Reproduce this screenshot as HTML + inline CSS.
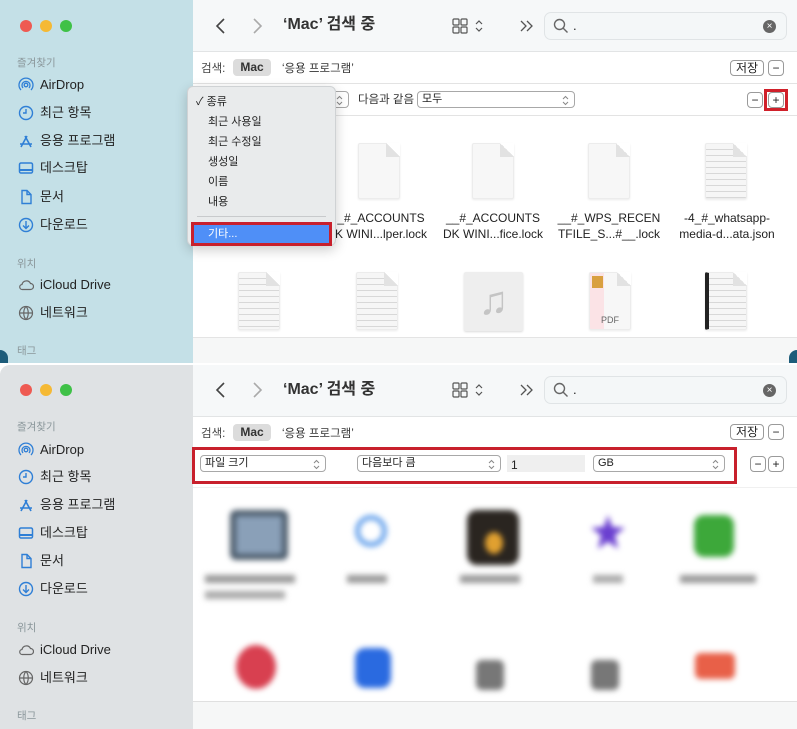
<!DOCTYPE html>
<html><head><meta charset="utf-8">
<style>
*{margin:0;padding:0;box-sizing:border-box}
body{width:797px;height:729px;position:relative;overflow:hidden;background:#fff;font-family:"Liberation Sans","Noto Sans CJK KR",sans-serif;color:#222}
.win{position:absolute;left:0;width:797px;overflow:hidden}
.a{position:absolute}
.sb{position:absolute;left:0;top:0;width:193px;height:100%}
.dot{position:absolute;width:12px;height:12px;border-radius:50%}
.hd{position:absolute;left:17px;font-size:10.5px;color:#8a969a}
.it{position:absolute;left:40px;font-size:13px;color:#222;line-height:16px}
.ic{position:absolute;left:18px;width:16px;height:16px}
.main{position:absolute;left:193px;top:0;right:0;bottom:0;background:#fff}
.tb{position:absolute;left:0;right:0;top:0;height:52px;background:#f6f8f9;border-bottom:1px solid #e2e4e5}
.t{position:absolute;font-size:13px;line-height:16px;white-space:nowrap}
.btn{position:absolute;border:1px solid #9a9a9a;border-radius:4px;background:#fff;font-size:12px;line-height:14px;text-align:center;color:#222}
.pop{position:absolute;border:1px solid #a8a8a8;border-radius:4px;background:#fff;font-size:11px;line-height:15px;padding-left:4px;height:17px}
.pop svg{position:absolute;right:5px;top:3px}
.sep{position:absolute;left:0;right:0;height:1px;background:#e3e3e3}
.doc{position:absolute;width:42px;height:56px;background:#f7f7f7;border:1px solid #ececec;border-radius:2px;box-shadow:0 1px 2px rgba(0,0,0,.08)}
.doc:before{content:"";position:absolute;right:-1px;top:-1px;width:14px;height:14px;background:linear-gradient(225deg,#fff 50%,#e2e2e2 50%)}
.lines{background:repeating-linear-gradient(#f6f6f6 0 5px,#d8d8d8 5px 6px)}
.lbl{position:absolute;width:110px;text-align:center;font-size:12px;line-height:16px;color:#222}
.blur{filter:blur(3px)}
</style></head><body>
<svg width="0" height="0" style="position:absolute"><defs><g id="ud"><path d="M1 4l2.5-2.5L6 4M1 7l2.5 2.5L6 7" fill="none" stroke="#888" stroke-width="1"/></g></defs></svg>

<!-- TOP WINDOW -->
<div class="win" style="top:0;height:363px;background:#c4e0e7">
 <div class="sb" style="background:#c4e0e7">
  <div class="dot" style="left:20px;top:20px;background:#ee5a52"></div>
  <div class="dot" style="left:40px;top:20px;background:#f5b934"></div>
  <div class="dot" style="left:60px;top:20px;background:#3fc147"></div>
  <div class="hd" style="top:55px">즐겨찾기</div>
  <svg class="ic" style="top:77px" viewBox="0 0 16 16" fill="none" stroke="#2f7fd6" stroke-width="1.3"><circle cx="8" cy="8" r="1.8"/><path d="M5 11a4 4 0 1 1 6 0M3 13a7 7 0 1 1 10 0"/></svg><div class="it" style="top:77px">AirDrop</div>
  <svg class="ic" style="top:105px" viewBox="0 0 16 16" fill="none" stroke="#2f7fd6" stroke-width="1.4"><circle cx="8" cy="8" r="6.5"/><path d="M8 4v4H5"/></svg><div class="it" style="top:105px">최근 항목</div>
  <svg class="ic" style="top:133px" viewBox="0 0 16 16" fill="none" stroke="#2f7fd6" stroke-width="1.6"><path d="M3 14L9 3M13 14L7 3M2 11h12"/></svg><div class="it" style="top:133px">응용 프로그램</div>
  <svg class="ic" style="top:160px" viewBox="0 0 16 16" fill="none" stroke="#2f7fd6" stroke-width="1.5"><rect x="1.5" y="3" width="13" height="10" rx="1.5"/><path d="M2 10h12" stroke-width="2"/></svg><div class="it" style="top:160px">데스크탑</div>
  <svg class="ic" style="top:189px" viewBox="0 0 16 16" fill="none" stroke="#2f7fd6" stroke-width="1.4"><path d="M4 1.5h5l4 4v9H4z M9 1.5v4h4"/></svg><div class="it" style="top:189px">문서</div>
  <svg class="ic" style="top:217px" viewBox="0 0 16 16" fill="none" stroke="#2f7fd6" stroke-width="1.4"><circle cx="8" cy="8" r="6.5"/><path d="M8 4v7M5 8.5l3 3 3-3"/></svg><div class="it" style="top:217px">다운로드</div>
  <div class="hd" style="top:256px">위치</div>
  <svg class="ic" style="top:277px" viewBox="0 0 16 16" fill="none" stroke="#666" stroke-width="1.2"><path d="M4.5 12.5h8a3 3 0 0 0 0-6 4.5 4.5 0 0 0-8.5 1 2.5 2.5 0 0 0 .5 5z"/></svg><div class="it" style="top:277px">iCloud Drive</div>
  <svg class="ic" style="top:305px" viewBox="0 0 16 16" fill="none" stroke="#666" stroke-width="1.2"><circle cx="8" cy="8" r="6.5"/><path d="M1.5 8h13M8 1.5c-3 3-3 10 0 13M8 1.5c3 3 3 10 0 13"/></svg><div class="it" style="top:305px">네트워크</div>
  <div class="hd" style="top:343px">태그</div>
  <div class="a" style="left:0;top:350px;width:8px;height:13px;background:#1d5c7a;border-top-right-radius:8px"></div>
 </div>
 <div class="main" style="border-top-right-radius:10px">
  <div class="tb">
   <svg class="a" style="left:22px;top:17px" width="12" height="18" viewBox="0 0 12 18" fill="none" stroke="#444" stroke-width="1.6"><path d="M9 2L2 9l7 7"/></svg>
   <svg class="a" style="left:58px;top:17px" width="12" height="18" viewBox="0 0 12 18" fill="none" stroke="#aaa" stroke-width="1.6"><path d="M3 2l7 7-7 7"/></svg>
   <div class="t" style="left:90px;top:17px;font-size:16px;font-weight:bold;color:#333">‘Mac’ 검색 중</div>
   <svg class="a" style="left:259px;top:18px" width="32" height="16" viewBox="0 0 32 16" fill="none" stroke="#555" stroke-width="1.2"><rect x="1" y="1" width="6" height="6" rx="1"/><rect x="9" y="1" width="6" height="6" rx="1"/><rect x="1" y="9" width="6" height="6" rx="1"/><rect x="9" y="9" width="6" height="6" rx="1"/><path d="M24 6l3-3 3 3M24 10l3 3 3-3"/></svg>
   <svg class="a" style="left:326px;top:19px" width="16" height="14" viewBox="0 0 16 14" fill="none" stroke="#555" stroke-width="1.3"><path d="M2 2l5 5-5 5M8 2l5 5-5 5"/></svg>
   <div class="a" style="left:351px;top:12px;width:243px;height:28px;border:1px solid #e0e4e6;border-radius:7px;background:#f4f7f8"></div>
   <svg class="a" style="left:360px;top:18px" width="16" height="16" viewBox="0 0 16 16" fill="none" stroke="#666" stroke-width="1.4"><circle cx="6.5" cy="6.5" r="5"/><path d="M10 10l4.5 4.5"/></svg>
   <div class="t" style="left:380px;top:18px">.</div>
   <div class="a" style="left:570px;top:20px;width:13px;height:13px;border-radius:50%;background:#666;color:#fff;font-size:10px;line-height:13px;text-align:center">×</div>
  </div>
  <div class="t" style="left:8px;top:61px;font-size:11.5px;color:#444">검색:</div>
  <div class="a" style="left:40px;top:59px;width:38px;height:17px;background:#dcdcdc;border-radius:4px;font-size:12px;font-weight:bold;text-align:center;line-height:17px;color:#333">Mac</div>
  <div class="t" style="left:89px;top:61px;font-size:11.5px;color:#333">‘응용 프로그램’</div>
  <div class="btn" style="left:537px;top:60px;width:34px;height:16px">저장</div>
  <div class="btn" style="left:575px;top:60px;width:16px;height:16px">−</div>
  <div class="sep" style="top:83px"></div>
  <div class="pop" style="left:120px;top:91px;width:36px"><svg width="7" height="11"><use href="#ud"/></svg></div>
  <div class="t" style="left:165px;top:92px;font-size:11.5px;color:#333">다음과 같음</div>
  <div class="pop" style="left:224px;top:91px;width:158px">모두<svg width="7" height="11"><use href="#ud"/></svg></div>
  <div class="btn" style="left:554px;top:92px;width:16px;height:16px">−</div>
  <div class="a" style="left:571px;top:89px;width:24px;height:22px;border:3px solid #d0202a"></div>
  <div class="btn" style="left:575px;top:92px;width:16px;height:16px">+</div>
  <div class="sep" style="top:115px"></div>

  <div class="doc" style="left:165px;top:143px"></div>
  <div class="doc" style="left:279px;top:143px"></div>
  <div class="doc" style="left:395px;top:143px"></div>
  <div class="doc lines" style="left:512px;top:143px"></div>
  <div class="lbl" style="left:133px;top:210px">_#_ACCOUNTS<br>K WINI...lper.lock</div>
  <div class="lbl" style="left:245px;top:210px">__#_ACCOUNTS<br>DK WINI...fice.lock</div>
  <div class="lbl" style="left:361px;top:210px">__#_WPS_RECEN<br>TFILE_S...#__.lock</div>
  <div class="lbl" style="left:479px;top:210px">-4_#_whatsapp-<br>media-d...ata.json</div>

  <div class="doc lines" style="left:45px;top:272px;height:58px"></div>
  <div class="doc lines" style="left:163px;top:272px;height:58px"></div>
  <div class="a" style="left:271px;top:272px;width:59px;height:59px;background:#eeeeee;border-radius:2px;box-shadow:0 1px 2px rgba(0,0,0,.15);color:#c4c4c4;font-size:40px;text-align:center;line-height:59px">♫</div>
  <div class="doc" style="left:396px;top:272px;height:58px;background:linear-gradient(90deg,#fbe3e6 0 14px,#f7f7f7 14px)"><div class="a" style="left:2px;top:3px;width:11px;height:12px;background:#d9a040"></div><div class="a" style="left:0;right:0;top:42px;font-size:9px;color:#666;text-align:center">PDF</div></div>
  <div class="doc lines" style="left:512px;top:272px;height:58px;border-left:4px solid #222"></div>

  <div class="a" style="left:0;right:0;top:337px;height:26px;background:#f6f7f7;border-top:1px solid #e4e4e4"></div>
  <div class="a" style="right:0;top:350px;width:8px;height:13px;background:#1d5c7a;border-top-left-radius:8px"></div>
 </div>
 <!-- menu -->
 <div class="a" style="left:187px;top:86px;width:149px;height:160px;background:#e9ebec;border:1px solid #cfd2d4;border-radius:6px;box-shadow:0 4px 12px rgba(0,0,0,.2)">
  <div class="t" style="left:8px;top:7px;font-size:11px">✓ 종류</div>
  <div class="t" style="left:20px;top:27px;font-size:11px">최근 사용일</div>
  <div class="t" style="left:20px;top:47px;font-size:11px">최근 수정일</div>
  <div class="t" style="left:20px;top:67px;font-size:11px">생성일</div>
  <div class="t" style="left:20px;top:87px;font-size:11px">이름</div>
  <div class="t" style="left:20px;top:107px;font-size:11px">내용</div>
  <div class="a" style="left:9px;right:9px;top:129px;height:1px;background:#c8cacc"></div>
  <div class="a" style="left:3px;top:135px;width:141px;height:24px;border:3px solid #c8202c;background:#4f8ff7;color:#fff;font-size:11px;line-height:18px;padding-left:14px">기타...</div>
 </div>
</div>

<!-- BOTTOM WINDOW -->
<div class="win" style="top:365px;height:364px;background:#dfe2e4;border-top-left-radius:10px">
 <div class="sb" style="background:#dfe2e4;border-top-left-radius:10px">
  <div class="dot" style="left:20px;top:19px;background:#ee5a52"></div>
  <div class="dot" style="left:40px;top:19px;background:#f5b934"></div>
  <div class="dot" style="left:60px;top:19px;background:#3fc147"></div>
  <div class="hd" style="top:54px">즐겨찾기</div>
  <svg class="ic" style="top:77px" viewBox="0 0 16 16" fill="none" stroke="#2f7fd6" stroke-width="1.3"><circle cx="8" cy="8" r="1.8"/><path d="M5 11a4 4 0 1 1 6 0M3 13a7 7 0 1 1 10 0"/></svg><div class="it" style="top:77px">AirDrop</div>
  <svg class="ic" style="top:104px" viewBox="0 0 16 16" fill="none" stroke="#2f7fd6" stroke-width="1.4"><circle cx="8" cy="8" r="6.5"/><path d="M8 4v4H5"/></svg><div class="it" style="top:104px">최근 항목</div>
  <svg class="ic" style="top:132px" viewBox="0 0 16 16" fill="none" stroke="#2f7fd6" stroke-width="1.6"><path d="M3 14L9 3M13 14L7 3M2 11h12"/></svg><div class="it" style="top:132px">응용 프로그램</div>
  <svg class="ic" style="top:160px" viewBox="0 0 16 16" fill="none" stroke="#2f7fd6" stroke-width="1.5"><rect x="1.5" y="3" width="13" height="10" rx="1.5"/><path d="M2 10h12" stroke-width="2"/></svg><div class="it" style="top:160px">데스크탑</div>
  <svg class="ic" style="top:188px" viewBox="0 0 16 16" fill="none" stroke="#2f7fd6" stroke-width="1.4"><path d="M4 1.5h5l4 4v9H4z M9 1.5v4h4"/></svg><div class="it" style="top:188px">문서</div>
  <svg class="ic" style="top:216px" viewBox="0 0 16 16" fill="none" stroke="#2f7fd6" stroke-width="1.4"><circle cx="8" cy="8" r="6.5"/><path d="M8 4v7M5 8.5l3 3 3-3"/></svg><div class="it" style="top:216px">다운로드</div>
  <div class="hd" style="top:255px">위치</div>
  <svg class="ic" style="top:277px" viewBox="0 0 16 16" fill="none" stroke="#666" stroke-width="1.2"><path d="M4.5 12.5h8a3 3 0 0 0 0-6 4.5 4.5 0 0 0-8.5 1 2.5 2.5 0 0 0 .5 5z"/></svg><div class="it" style="top:277px">iCloud Drive</div>
  <svg class="ic" style="top:305px" viewBox="0 0 16 16" fill="none" stroke="#666" stroke-width="1.2"><circle cx="8" cy="8" r="6.5"/><path d="M1.5 8h13M8 1.5c-3 3-3 10 0 13M8 1.5c3 3 3 10 0 13"/></svg><div class="it" style="top:305px">네트워크</div>
  <div class="hd" style="top:343px">태그</div>
 </div>
 <div class="main">
  <div class="tb">
   <svg class="a" style="left:22px;top:16px" width="12" height="18" viewBox="0 0 12 18" fill="none" stroke="#444" stroke-width="1.6"><path d="M9 2L2 9l7 7"/></svg>
   <svg class="a" style="left:58px;top:16px" width="12" height="18" viewBox="0 0 12 18" fill="none" stroke="#aaa" stroke-width="1.6"><path d="M3 2l7 7-7 7"/></svg>
   <div class="t" style="left:90px;top:17px;font-size:16px;font-weight:bold;color:#333">‘Mac’ 검색 중</div>
   <svg class="a" style="left:259px;top:17px" width="32" height="16" viewBox="0 0 32 16" fill="none" stroke="#555" stroke-width="1.2"><rect x="1" y="1" width="6" height="6" rx="1"/><rect x="9" y="1" width="6" height="6" rx="1"/><rect x="1" y="9" width="6" height="6" rx="1"/><rect x="9" y="9" width="6" height="6" rx="1"/><path d="M24 6l3-3 3 3M24 10l3 3 3-3"/></svg>
   <svg class="a" style="left:326px;top:18px" width="16" height="14" viewBox="0 0 16 14" fill="none" stroke="#555" stroke-width="1.3"><path d="M2 2l5 5-5 5M8 2l5 5-5 5"/></svg>
   <div class="a" style="left:351px;top:11px;width:243px;height:28px;border:1px solid #e0e4e6;border-radius:7px;background:#f4f7f8"></div>
   <svg class="a" style="left:360px;top:17px" width="16" height="16" viewBox="0 0 16 16" fill="none" stroke="#666" stroke-width="1.4"><circle cx="6.5" cy="6.5" r="5"/><path d="M10 10l4.5 4.5"/></svg>
   <div class="t" style="left:380px;top:17px">.</div>
   <div class="a" style="left:570px;top:19px;width:13px;height:13px;border-radius:50%;background:#666;color:#fff;font-size:10px;line-height:13px;text-align:center">×</div>
  </div>
  <div class="t" style="left:8px;top:61px;font-size:11.5px;color:#444">검색:</div>
  <div class="a" style="left:40px;top:59px;width:38px;height:17px;background:#dcdcdc;border-radius:4px;font-size:12px;font-weight:bold;text-align:center;line-height:17px;color:#333">Mac</div>
  <div class="t" style="left:89px;top:61px;font-size:11.5px;color:#333">‘응용 프로그램’</div>
  <div class="btn" style="left:537px;top:59px;width:34px;height:16px">저장</div>
  <div class="btn" style="left:575px;top:59px;width:16px;height:16px">−</div>
  <div class="a" style="left:-1px;top:82px;width:545px;height:37px;border:3px solid #c8202c"></div>
  <div class="pop" style="left:7px;top:90px;width:126px">파일 크기<svg width="7" height="11"><use href="#ud"/></svg></div>
  <div class="pop" style="left:164px;top:90px;width:144px">다음보다 큼<svg width="7" height="11"><use href="#ud"/></svg></div>
  <div class="a" style="left:314px;top:90px;width:78px;height:17px;background:#efefef;font-size:12px;line-height:20px;padding-left:4px">1</div>
  <div class="pop" style="left:400px;top:90px;width:132px">GB<svg width="7" height="11"><use href="#ud"/></svg></div>
  <div class="btn" style="left:557px;top:91px;width:16px;height:16px">−</div>
  <div class="btn" style="left:575px;top:91px;width:16px;height:16px">+</div>
  <div class="sep" style="top:122px;background:#f0f0f0"></div>

  <div class="blur">
   <div class="a" style="left:37px;top:145px;width:58px;height:50px;background:#4a5a6a;border-radius:6px"><div class="a" style="left:6px;top:6px;width:46px;height:38px;background:#8aa0b8"></div></div>
   <div class="a" style="left:162px;top:150px;width:32px;height:32px;border:5px solid #6aa4ec;border-radius:50%"></div>
   <div class="a" style="left:274px;top:145px;width:52px;height:55px;background:#2a2520;border-radius:10px"><div class="a" style="left:18px;top:22px;width:18px;height:22px;background:#e0a030;border-radius:50%"></div></div>
   <div class="a" style="left:398px;top:150px;width:34px;height:34px;background:#6a3fd0;clip-path:polygon(50% 0,62% 35%,100% 38%,70% 60%,80% 100%,50% 78%,20% 100%,30% 60%,0 38%,38% 35%)"></div>
   <div class="a" style="left:501px;top:150px;width:40px;height:42px;background:#3da83a;border-radius:10px"></div>
   <div class="a" style="left:12px;top:210px;width:90px;height:8px;background:#999"></div>
   <div class="a" style="left:12px;top:226px;width:80px;height:8px;background:#aaa"></div>
   <div class="a" style="left:154px;top:210px;width:40px;height:8px;background:#999"></div>
   <div class="a" style="left:267px;top:210px;width:60px;height:8px;background:#999"></div>
   <div class="a" style="left:400px;top:210px;width:30px;height:8px;background:#aaa"></div>
   <div class="a" style="left:487px;top:210px;width:76px;height:8px;background:#999"></div>
   <div class="a" style="left:43px;top:280px;width:40px;height:44px;background:#d84050;border-radius:50%"></div>
   <div class="a" style="left:162px;top:283px;width:36px;height:40px;background:#2a6ae0;border-radius:10px"></div>
   <div class="a" style="left:283px;top:295px;width:28px;height:30px;background:#777;border-radius:6px"></div>
   <div class="a" style="left:398px;top:295px;width:28px;height:30px;background:#777;border-radius:6px"></div>
   <div class="a" style="left:502px;top:288px;width:40px;height:26px;background:#e86048;border-radius:6px"></div>
  </div>
  <div class="a" style="left:0;right:0;top:336px;height:28px;background:#f6f7f7;border-top:1px solid #e0e0e0"></div>
 </div>
</div>
</body></html>
